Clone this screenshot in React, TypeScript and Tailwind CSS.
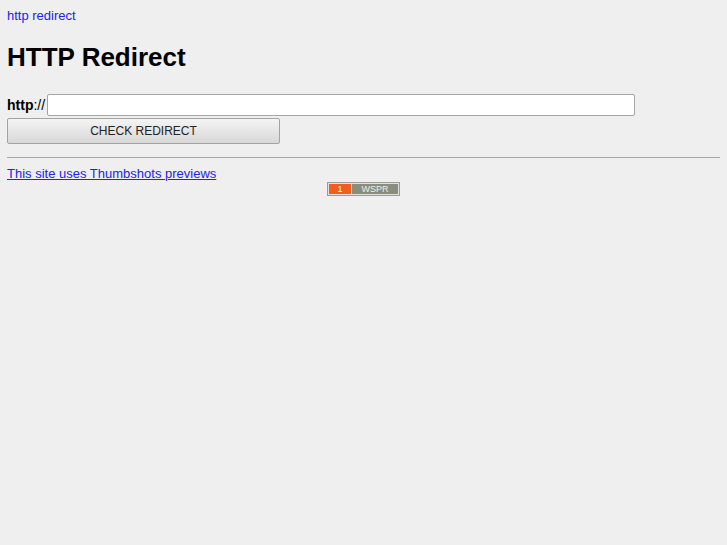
import React from "react";

const App: React.FC = () => {
  return (
    <div className="min-h-[545px] bg-[#efefef] px-[7px] pt-[8px] text-black font-['Liberation_Sans',Arial,sans-serif]">
      {/* top link */}
      <a href="#" className="block text-[13px] leading-[16px] text-[#2222ee] no-underline">
        http redirect
      </a>

      <h1 className="mt-[18px] text-[26px] leading-[30px] font-bold">HTTP Redirect</h1>

      {/* form */}
      <div className="mt-[22px] flex items-center">
        <span className="text-[14px]">
          <b>http</b>://
        </span>
        <input
          type="text"
          className="ml-[2px] h-[22px] w-[588px] rounded-[2px] border border-[#a5a5a5] bg-white px-1 text-[13px] outline-none"
        />
      </div>
      <button className="mt-[2px] block h-[26px] w-[273px] rounded-[2px] border border-[#a3a3a3] bg-gradient-to-b from-[#f4f4f4] to-[#d8d8d8] text-[12px] text-[#222]">
        CHECK REDIRECT
      </button>

      <hr className="mt-[13px] border-t border-[#a8a8a8]" />

      <a href="#" className="mt-[8px] block text-[13px] leading-[16px] text-[#2222ee] underline">
        This site uses Thumbshots previews
      </a>

      {/* badge */}
      <div className="flex justify-center">
        <div className="flex h-[14px] w-[73px] border border-[#9a9a9a] bg-[#e0e0e0] p-px">
          <div className="flex w-[22px] items-center justify-center bg-[#f25c1c] text-[9px] leading-none text-white">
            1
          </div>
          <div className="ml-px flex flex-1 items-center justify-center bg-[#898e7c] text-[9px] leading-none text-[#eeeeee]">
            WSPR
          </div>
        </div>
      </div>
    </div>
  );
};

export default App;
